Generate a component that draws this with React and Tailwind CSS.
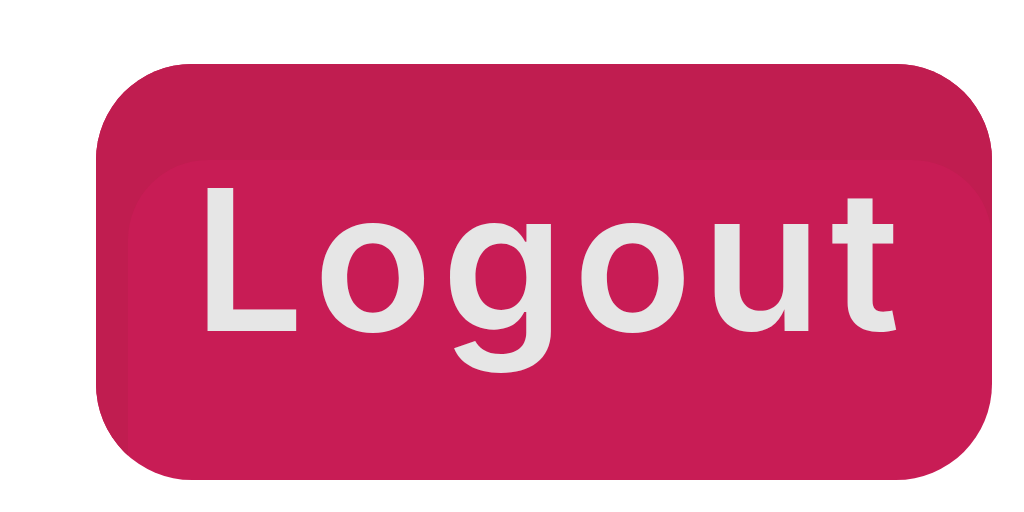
export default function App() {
  return (
    <div className="w-[1024px] h-[512px] bg-white pt-[64px] pl-[96px]">
      <button
        type="button"
        className="w-[896px] h-[416px] rounded-[96px] bg-[#c81c55] shadow-[inset_16px_80px_0_16px_#c01d50] flex items-center justify-center pl-[14px] pb-[24px] text-[#e6e6e6] text-[196px] font-semibold tracking-[9px] leading-none"
        style={{ fontFamily: 'Inter, "Open Sans", sans-serif' }}
      >
        Logout
      </button>
    </div>
  );
}
